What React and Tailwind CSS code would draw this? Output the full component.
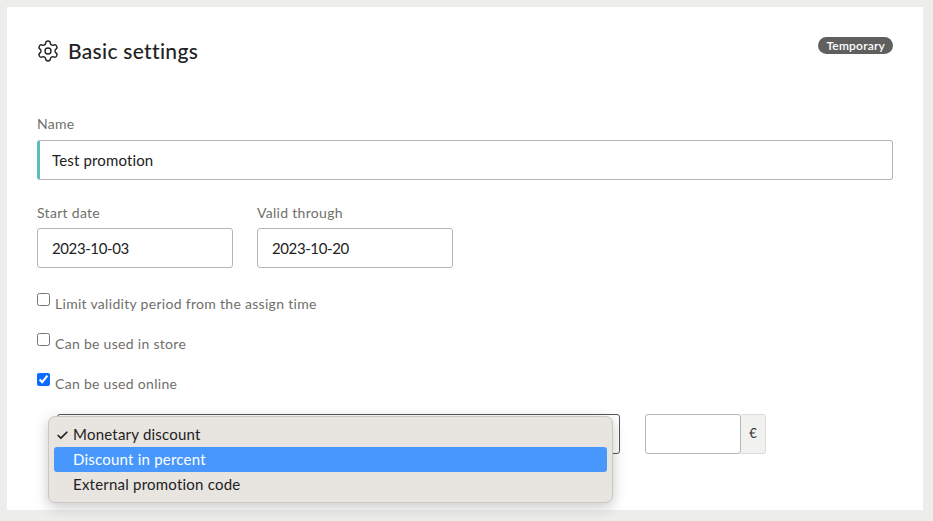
import React from "react";
import { Check, Settings } from "lucide-react";

const labelClass = "block text-[14px] leading-[20px] tracking-[0.3px] text-[#6f6f6a]";
const inputClass =
  "block h-10 w-full rounded-[3px] border border-[#b5b5b3] bg-white px-[14px] text-[15px] text-[#222] outline-none";

const CheckRow = ({ label, checked }) => (
  <label className="flex h-5 items-start gap-[5px] text-[14px] leading-5 tracking-[0.3px] text-[#6f6f6a]">
    <input
      type="checkbox"
      defaultChecked={checked}
      className="-mt-[1px] h-[13px] w-[13px] shrink-0 accent-[#0b6cff]"
    />
    <span>{label}</span>
  </label>
);

const App = () => {
  return (
    <div
      className="h-[521px] w-[933px] overflow-hidden bg-[#ededeb] p-[7px] pb-[11px] pr-[10px]"
      style={{ fontFamily: '"Lato", "Noto Sans", sans-serif' }}
    >
      <div className="relative h-full bg-white px-[30px] pt-[30px]">
        {/* Header */}
        <div className="flex h-[30px] items-start justify-between">
          <div className="flex h-[28px] items-center gap-[8px]">
            <Settings size={24} strokeWidth={1.4} className="-ml-[1px] text-[#222]" />
            <h2 className="text-[21px] font-medium leading-[30px] tracking-[0.3px] text-[#222]">
              Basic settings
            </h2>
          </div>
          <span className="rounded-full bg-[#5f5f5d] px-[8px] text-[12px] font-semibold leading-[17px] tracking-[0.2px] text-white">
            Temporary
          </span>
        </div>

        {/* Name */}
        <div className="mt-[47px]">
          <label className={labelClass}>Name</label>
          <input
            readOnly
            value="Test promotion"
            className={`${inputClass} mt-[6px] border-l-[3px] border-l-[#5fbcb8] pl-3 tracking-[0.15px]`}
          />
        </div>

        {/* Dates */}
        <div className="mt-[23px] flex gap-6">
          <div className="w-[196px]">
            <label className={labelClass}>Start date</label>
            <input readOnly value="2023-10-03" className={`${inputClass} mt-[5px] tracking-[-0.4px]`} />
          </div>
          <div className="w-[196px]">
            <label className={labelClass}>Valid through</label>
            <input readOnly value="2023-10-20" className={`${inputClass} mt-[5px] tracking-[-0.4px]`} />
          </div>
        </div>

        {/* Checkboxes */}
        <div className="mt-[26px] flex flex-col gap-5">
          <CheckRow label="Limit validity period from the assign time" />
          <CheckRow label="Can be used in store" />
          <CheckRow label="Can be used online" checked />
        </div>

        {/* Discount */}
        <div className="mt-[20px] flex pl-5">
          <div className="h-10 w-[563px] rounded-[3px] border border-[#555] bg-white" />
          <div className="ml-[25px] flex">
            <input
              readOnly
              className="h-10 w-[96px] rounded-[3px] border border-[#b5b5b3] bg-white outline-none"
            />
            <span className="flex h-10 w-[25px] items-center justify-center rounded-r-[3px] border border-l-0 border-[#dcdcda] bg-[#f1f1f0] text-[13px] text-[#333]">
              €
            </span>
          </div>
        </div>

        {/* Open select menu */}
        <ul className="absolute left-[41px] top-[409px] w-[565px] rounded-[7px] border border-[#c9c7c4] bg-[#e8e4e0] px-[5px] py-[5px] text-[15px] tracking-[0.22px] text-[#222] shadow-[0_4px_14px_rgba(0,0,0,0.22)]">
          <li className="relative h-[25px] rounded-[3px] pl-[19px] leading-[25px]">
            <Check size={13} strokeWidth={3.2} className="absolute left-[2px] top-[7px]" />
            Monetary discount
          </li>
          <li className="h-[25px] rounded-[3px] bg-[#4897fd] pl-[19px] leading-[25px] text-white">
            Discount in percent
          </li>
          <li className="h-[25px] rounded-[3px] pl-[19px] leading-[25px]">
            External promotion code
          </li>
        </ul>
      </div>
    </div>
  );
};

export default App;
